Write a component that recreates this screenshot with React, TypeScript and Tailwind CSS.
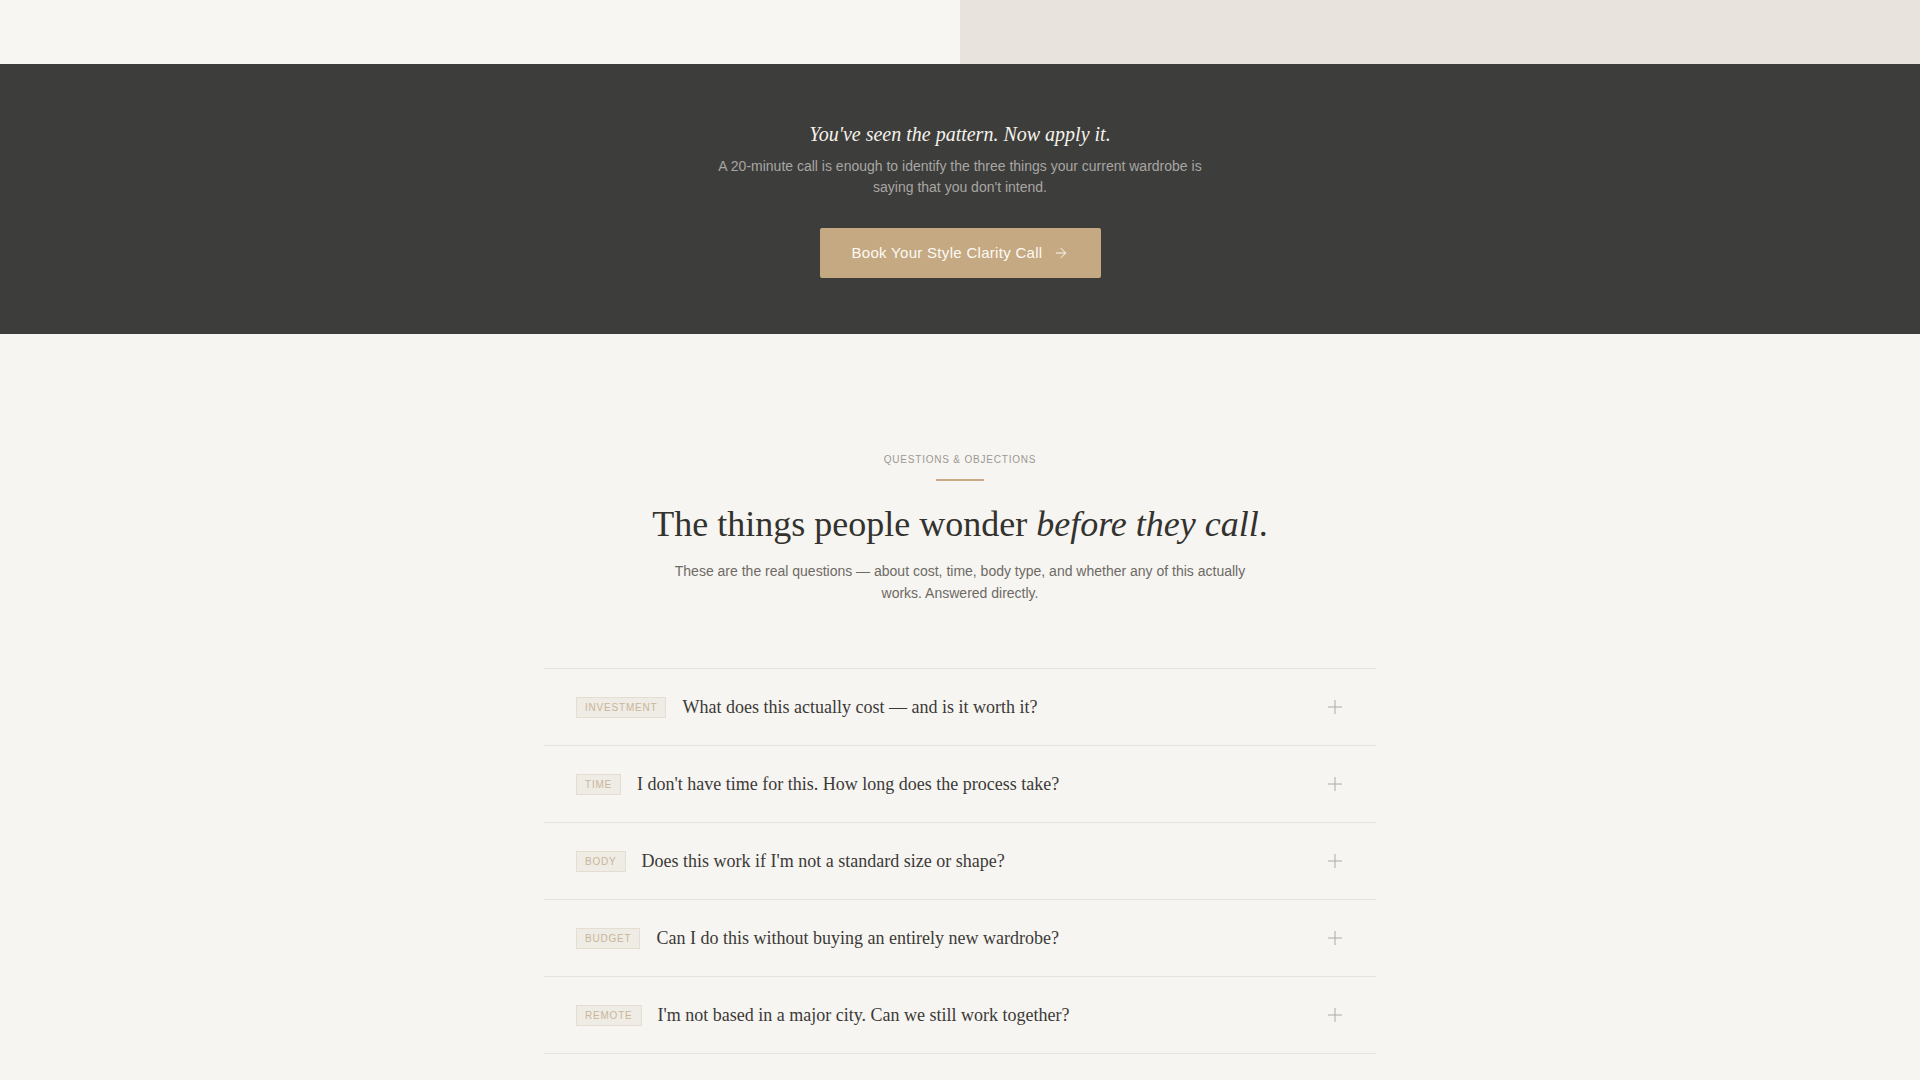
import { ArrowRight } from 'lucide-react';

interface Faq {
  tag: string;
  question: string;
}

const faqs: Faq[] = [
  { tag: 'Investment', question: 'What does this actually cost — and is it worth it?' },
  { tag: 'Time', question: "I don't have time for this. How long does the process take?" },
  { tag: 'Body', question: "Does this work if I'm not a standard size or shape?" },
  { tag: 'Budget', question: 'Can I do this without buying an entirely new wardrobe?' },
  { tag: 'Remote', question: "I'm not based in a major city. Can we still work together?" },
];

const serif = "font-['Liberation_Serif',serif]";
const sans = "font-['Liberation_Sans',Arial,sans-serif]";

function PlusIcon() {
  return (
    <svg width="18" height="18" viewBox="0 0 18 18" fill="none" className="shrink-0">
      <path d="M9 2v14M2 9h14" stroke="#aeaaa4" strokeWidth="1" />
    </svg>
  );
}

function FaqRow({ item }: { item: Faq }) {
  return (
    <div className="flex items-center justify-between border-b border-[#e7e2db] px-8 py-6">
      <div className="flex items-center gap-4">
        <span
          className={`${sans} border border-[#e4ddd2] bg-[#efebe5] px-2 py-[2px] text-[10px] leading-[15px] uppercase tracking-[0.08em] text-[#c8b698]`}
        >
          {item.tag}
        </span>
        <span className={`${serif} text-[18px] leading-7 text-[#3b3a38]`}>{item.question}</span>
      </div>
      <PlusIcon />
    </div>
  );
}

export default function App() {
  return (
    <div className={`${sans} min-h-screen bg-[#f7f5f1]`}>
      {/* Tail of the hero split */}
      <div className="flex h-16">
        <div className="flex-1 bg-[#f7f6f2]" />
        <div className="flex-1 bg-[#e9e3dd]" />
      </div>

      {/* Call to action band */}
      <section className="flex flex-col items-center bg-[#3d3d3c] pt-[56px] pb-[56px] text-center">
        <h3 className={`${serif} text-[20px] leading-7 italic text-[#f6f2eb]`}>
          You've seen the pattern. Now apply it.
        </h3>
        <p className="mt-2 max-w-[500px] text-[14px] leading-[21px] text-[#a8a6a2]">
          A 20-minute call is enough to identify the three things your current wardrobe is saying
          that you don't intend.
        </p>
        <button className="mt-[30px] flex h-[50px] items-center gap-2.5 rounded-[2px] bg-[#c4a983] px-8 text-[15px] tracking-[0.02em] text-[#fdfaf4]">
          Book Your Style Clarity Call
          <ArrowRight size={16} strokeWidth={1.5} />
        </button>
      </section>

      {/* FAQ */}
      <section className="flex flex-col items-center pt-[120px] pb-24">
        <p className="text-[10px] leading-3 uppercase tracking-[0.08em] text-[#9b9893]">
          Questions &amp; Objections
        </p>
        <div className="mt-[13px] h-[2px] w-12 bg-[#c9a882]" />
        <h2 className={`${serif} mt-[22px] text-[36px] leading-[1.2] text-[#33322f]`}>
          The things people wonder <em>before they call</em>.
        </h2>
        <p className="mt-[14px] max-w-[600px] text-center text-[14px] leading-[22px] text-[#6d6a65]">
          These are the real questions — about cost, time, body type, and whether any of this
          actually works. Answered directly.
        </p>

        <div className="mt-[64px] w-[832px] border-t border-[#e7e2db]">
          {faqs.map((item) => (
            <FaqRow key={item.tag} item={item} />
          ))}
        </div>
      </section>
    </div>
  );
}
